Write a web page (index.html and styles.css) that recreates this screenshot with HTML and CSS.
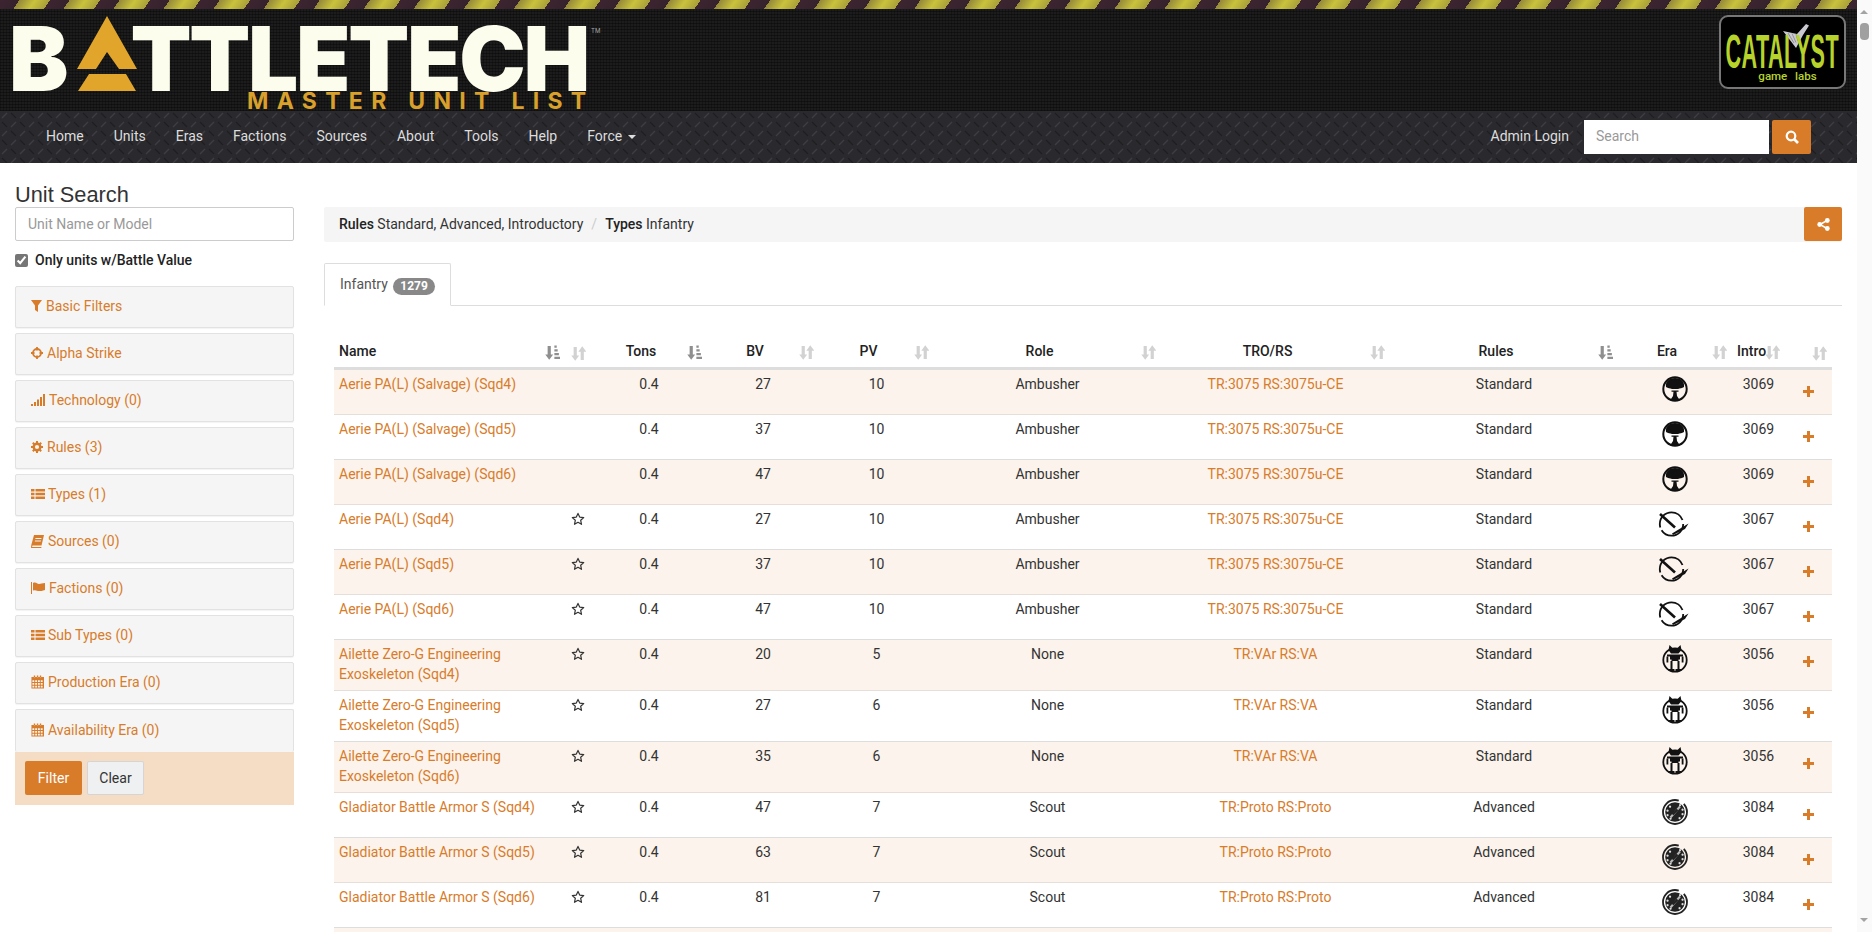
FILE: index.html
```html
<!DOCTYPE html>
<html>
<head>
  <meta charset="utf-8">
  <title>Master Unit List</title>
  <link rel="stylesheet" href="styles.css">
</head>
<body>
<svg class="defs" xmlns="http://www.w3.org/2000/svg">
  <symbol id="era-tree" viewBox="0 0 26 26" overflow="visible">
    <circle cx="13" cy="13" r="11.700" fill="none" stroke="#111" stroke-width="2"/>
    <path d="M4 11C3 5 8 2 13 2s10 3 9 9c-2 1.500-4 1-6 2h-6c-2-1-4-.5-6-2Z" fill="#111"/>
    <path d="M9.500 14.500h7v1.200h-7zM11.500 15.700h3l.5 4.300 3 4.500H8l3-4.500z" fill="#111"/>
  </symbol>
  <symbol id="era-pick" viewBox="0 0 26 26" overflow="visible">
    <circle cx="9.500" cy="13" r="11.700" fill="none" stroke="#111" stroke-width="1.800" stroke-dasharray="30 3 36 4"/>
    <path d="M-2 3L13 16.500" stroke="#111" stroke-width="2.600"/>
    <path d="M10 22.500L26.500 12.500L23 18L11 24Z" fill="#111"/>
  </symbol>
  <symbol id="era-mech" viewBox="0 0 26 26" overflow="visible">
    <circle cx="13" cy="14" r="11.700" fill="none" stroke="#111" stroke-width="1.800"/>
    <path d="M7.500-1l3 3h5l3-3 1 5-3 3.500h-7.500L6.500 4z" fill="#111"/>
    <path d="M5 8.500h16v2H18v3h-1.500v1.500h-7v-1.500H8v-3H5z" fill="#111"/>
    <path d="M4.500 10.500h1.800v6H4.500zM19.700 10.500h1.800v6h-1.800z" fill="#111"/>
    <path d="M8.500 15h2v8h-2zM15.500 15h2v8h-2zM6.500 23h6v2h-6zM13.500 23h6v2h-6z" fill="#111"/>
  </symbol>
  <symbol id="era-disc" viewBox="0 0 26 26" overflow="visible">
    <circle cx="13" cy="13" r="12" fill="none" stroke="#222" stroke-width="1.800" stroke-dasharray="60 6"/>
    <circle cx="13" cy="13" r="9.800" fill="#222"/>
    <path d="M8 6.500a1.100 1.100 0 1 0 .1 0zM5.500 10.500a1.100 1.100 0 1 0 .1 0zM5.500 15a1.100 1.100 0 1 0 .1 0zM8.500 18.500a1.100 1.100 0 1 0 .1 0zM18 5a1.100 1.100 0 1 0 .1 0zM20.500 9.500a1.100 1.100 0 1 0 .1 0zM20.500 14a1.100 1.100 0 1 0 .1 0zM17.500 18a1.100 1.100 0 1 0 .1 0z" fill="#ddd"/>
    <path d="M8.500 18.500L18 7.500" stroke="#bbb" stroke-width="2"/>
    <path d="M10.500 15.500l5-5" stroke="#222" stroke-width="2.400"/>
  </symbol>
  <symbol id="sort-on" viewBox="0 0 16 16">
    <path d="M2.800 1h3.400v9h2.500L4.500 15.800 .3 10h2.500z" fill="currentColor"/>
    <path d="M10 .5h2.500v2.500H10zM10 4.500h3.500V7H10zM10 8.500h4.800V11H10zM10 12.500h6V15h-6z" fill="currentColor"/>
  </symbol>
  <symbol id="sort-off" viewBox="0 0 16 16">
    <path d="M2.800 1h3.400v9h2.500L4.500 15.800 .3 10h2.500zM10.300 15V6H7.800L12 .2 16.200 6h-2.500v9z" fill="currentColor"/>
  </symbol>
  <symbol id="star" viewBox="0 0 14 14">
    <path d="M7 1.400l1.700 3.700 4 .5-3 2.700.8 4L7 10.300l-3.500 2 .8-4-3-2.700 4-.5z" fill="none" stroke="#333" stroke-width="1.200" stroke-linejoin="round"/>
  </symbol>
  <symbol id="plus" viewBox="0 0 11 11">
    <path d="M4 0h3v4h4v3H7v4H4V7H0V4h4z" fill="#d87c2a"/>
  </symbol>
  <symbol id="list" viewBox="0 0 14 12">
    <path d="M0 1h3.500v2.500H0zM0 4.800h3.500v2.500H0zM0 8.600h3.500v2.500H0zM4.500 1H14v2.500H4.500zM4.500 4.800H14v2.500H4.500zM4.500 8.600H14v2.500H4.500z" fill="currentColor"/>
  </symbol>
  <symbol id="calendar" viewBox="0 0 14 14">
    <path d="M3 0h1.500v2H3zM6.300 0h1.500v2H6.300zM9.500 0H11v2H9.500zM.5 1.500H14V14H.5zM1.500 5v2h2V5zm3 0v2h2V5zm3 0v2h2V5zm3 0v2h2V5zM1.500 8v2h2V8zm3 0v2h2V8zm3 0v2h2V8zm3 0v2h2V8zM1.500 11v2h2v-2zm3 0v2h2v-2zm3 0v2h2v-2zm3 0v2h2v-2z" fill="currentColor" fill-rule="evenodd"/>
  </symbol>
</svg>

<div class="page">
  <header class="brand">
    <div class="hazard"></div>
    <div class="brand-row">
      <div class="logo">
        <div class="logo-word">
          <span class="logo-b">B</span>
          <svg class="logo-mark" width="60" height="75" viewBox="0 0 60 75">
            <path d="M30 0L60 53H42L30 36 19 53H0ZM12 58H49L59 75H1Z" fill="#e0a52a"/>
          </svg>
          <span class="logo-rest">TTLETECH</span>
          <span class="logo-tm">TM</span>
        </div>
        <div class="logo-sub">MASTER UNIT LIST</div>
      </div>
      <div class="catalyst">
        <svg class="flask" width="26" height="24" viewBox="0 0 26 24">
          <path d="M0 7L14 10 23 0l3 1.500L20 11 13 24Z" fill="#c9c9d2"/>
          <path d="M5 9l6 10M9 9.500l4 9M13 10l2 7" stroke="#777" stroke-width=".7"/>
        </svg>
        <span class="catalyst-name">CATALYST</span>
        <span class="catalyst-sub">game labs</span>
      </div>
    </div>
  </header>

  <nav class="topnav">
    <a href="#">Home</a>
    <a href="#">Units</a>
    <a href="#">Eras</a>
    <a href="#">Factions</a>
    <a href="#">Sources</a>
    <a href="#">About</a>
    <a href="#">Tools</a>
    <a href="#">Help</a>
    <a href="#">Force <span class="caret"></span></a>
    <a class="admin" href="#">Admin Login</a>
    <input class="nav-search" type="text" placeholder="Search">
    <button class="btn btn-orange nav-btn">
      <svg width="14" height="14" viewBox="0 0 14 14"><circle cx="6" cy="6" r="4.300" fill="none" stroke="#fff" stroke-width="2.200"/><path d="M9 9l4 4" stroke="#fff" stroke-width="2.600"/></svg>
    </button>
  </nav>

  <div class="content">
    <aside class="sidebar">
      <h3>Unit Search</h3>
      <input class="unit-input" type="text" placeholder="Unit Name or Model">
      <label class="only-bv"><input type="checkbox" checked> Only units w/Battle Value</label>

      <a class="panel" href="#"><svg width="11" height="12" viewBox="0 0 11 12"><path d="M0 0h11L7 5.500V12L4 10V5.500z" fill="currentColor"/></svg>Basic Filters</a>
      <a class="panel" href="#"><svg width="12" height="12" viewBox="0 0 12 12"><circle cx="6" cy="6" r="4" fill="none" stroke="currentColor" stroke-width="1.800"/><path d="M6 0v3.500M6 8.500V12M0 6h3.500M8.500 6H12" stroke="currentColor" stroke-width="1.800"/></svg>Alpha Strike</a>
      <a class="panel" href="#"><svg width="14" height="12" viewBox="0 0 14 12"><path d="M0 10h2v2H0zM3 8h2v4H3zM6 5.500h2V12H6zM9 3h2v9H9zM12 0h2v12h-2z" fill="currentColor"/></svg>Technology (0)</a>
      <a class="panel" href="#"><svg width="12" height="12" viewBox="0 0 12 12"><circle cx="6" cy="6" r="3.300" fill="none" stroke="currentColor" stroke-width="2.400"/><path d="M6 0v2.500M6 9.500V12M0 6h2.500M9.500 6H12M1.800 1.800l1.800 1.800M8.400 8.400l1.800 1.800M10.200 1.800L8.400 3.600M3.600 8.400l-1.800 1.800" stroke="currentColor" stroke-width="2"/></svg>Rules (3)</a>
      <a class="panel" href="#"><svg class="wide" width="14" height="12"><use href="#list"/></svg>Types (1)</a>
      <a class="panel" href="#"><svg width="13" height="13" viewBox="0 0 13 13"><path d="M3 0h10l-2.500 10.500H1.500L1 12h9.500l-.3 1H0l.3-3zM4.500 3l-.2 1h6l.2-1zM4 5.500l-.2 1h6l.2-1z" fill="currentColor" fill-rule="evenodd"/></svg>Sources (0)</a>
      <a class="panel" href="#"><svg width="14" height="12" viewBox="0 0 14 12"><path d="M0 0h1v12H0zM2 1c3-1.500 4 1 6 1 2 0 3-1 6-1v7c-3 1-4 1-6 1-2 0-3-1.500-6-.5z" fill="currentColor"/></svg>Factions (0)</a>
      <a class="panel" href="#"><svg class="wide" width="14" height="12"><use href="#list"/></svg>Sub Types (0)</a>
      <a class="panel" href="#"><svg width="13" height="14"><use href="#calendar"/></svg>Production Era (0)</a>
      <a class="panel panel-last" href="#"><svg width="13" height="14"><use href="#calendar"/></svg>Availability Era (0)</a>
      <div class="filter-bar">
        <button class="btn btn-orange">Filter</button>
        <button class="btn btn-plain">Clear</button>
      </div>
    </aside>

    <main class="results">
      <div class="crumbs">
        <span><b>Rules</b> Standard, Advanced, Introductory</span>
        <span class="crumb-sep">/</span>
        <span><b>Types</b> Infantry</span>
        <button class="btn btn-orange share-btn">
          <svg width="13" height="13" viewBox="0 0 13 13"><path d="M10 2.500L3 6.500l7 4" fill="none" stroke="#fff" stroke-width="1.500"/><circle cx="10.300" cy="2.500" r="2.400" fill="#fff"/><circle cx="2.700" cy="6.500" r="2.400" fill="#fff"/><circle cx="10.300" cy="10.500" r="2.400" fill="#fff"/></svg>
        </button>
      </div>

      <div class="tabs">
        <div class="tab">Infantry <span class="badge">1279</span></div>
      </div>

      <table class="units">
        <colgroup>
          <col class="c-name"><col class="c-star"><col class="c-tons"><col class="c-bv"><col class="c-pv"><col class="c-role"><col class="c-tro"><col class="c-rules"><col class="c-era"><col class="c-intro"><col class="c-add">
        </colgroup>
        <thead>
          <tr>
            <th class="left"><div><span>Name</span><svg class="on"><use href="#sort-on"/></svg></div></th>
            <th><div><span></span><svg><use href="#sort-off"/></svg></div></th>
            <th><div><span>Tons</span><svg class="on"><use href="#sort-on"/></svg></div></th>
            <th><div><span>BV</span><svg><use href="#sort-off"/></svg></div></th>
            <th><div><span>PV</span><svg><use href="#sort-off"/></svg></div></th>
            <th><div><span>Role</span><svg><use href="#sort-off"/></svg></div></th>
            <th><div><span>TRO/RS</span><svg><use href="#sort-off"/></svg></div></th>
            <th><div><span>Rules</span><svg class="on"><use href="#sort-on"/></svg></div></th>
            <th><div><span>Era</span><svg><use href="#sort-off"/></svg></div></th>
            <th><div><span>Intro</span><svg><use href="#sort-off"/></svg></div></th>
            <th><div><span></span><svg><use href="#sort-off"/></svg></div></th>
          </tr>
        </thead>
        <tbody>
          <tr class="odd"><td class="left"><a href="#">Aerie PA(L) (Salvage) (Sqd4)</a></td><td></td><td>0.4</td><td>27</td><td>10</td><td>Ambusher</td><td><a href="#">TR:3075 RS:3075u-CE</a></td><td>Standard</td><td><svg class="era"><use href="#era-tree"/></svg></td><td>3069</td><td><svg class="add"><use href="#plus"/></svg></td></tr>
          <tr><td class="left"><a href="#">Aerie PA(L) (Salvage) (Sqd5)</a></td><td></td><td>0.4</td><td>37</td><td>10</td><td>Ambusher</td><td><a href="#">TR:3075 RS:3075u-CE</a></td><td>Standard</td><td><svg class="era"><use href="#era-tree"/></svg></td><td>3069</td><td><svg class="add"><use href="#plus"/></svg></td></tr>
          <tr class="odd"><td class="left"><a href="#">Aerie PA(L) (Salvage) (Sqd6)</a></td><td></td><td>0.4</td><td>47</td><td>10</td><td>Ambusher</td><td><a href="#">TR:3075 RS:3075u-CE</a></td><td>Standard</td><td><svg class="era"><use href="#era-tree"/></svg></td><td>3069</td><td><svg class="add"><use href="#plus"/></svg></td></tr>
          <tr><td class="left"><a href="#">Aerie PA(L) (Sqd4)</a></td><td><svg class="fav"><use href="#star"/></svg></td><td>0.4</td><td>27</td><td>10</td><td>Ambusher</td><td><a href="#">TR:3075 RS:3075u-CE</a></td><td>Standard</td><td><svg class="era"><use href="#era-pick"/></svg></td><td>3067</td><td><svg class="add"><use href="#plus"/></svg></td></tr>
          <tr class="odd"><td class="left"><a href="#">Aerie PA(L) (Sqd5)</a></td><td><svg class="fav"><use href="#star"/></svg></td><td>0.4</td><td>37</td><td>10</td><td>Ambusher</td><td><a href="#">TR:3075 RS:3075u-CE</a></td><td>Standard</td><td><svg class="era"><use href="#era-pick"/></svg></td><td>3067</td><td><svg class="add"><use href="#plus"/></svg></td></tr>
          <tr><td class="left"><a href="#">Aerie PA(L) (Sqd6)</a></td><td><svg class="fav"><use href="#star"/></svg></td><td>0.4</td><td>47</td><td>10</td><td>Ambusher</td><td><a href="#">TR:3075 RS:3075u-CE</a></td><td>Standard</td><td><svg class="era"><use href="#era-pick"/></svg></td><td>3067</td><td><svg class="add"><use href="#plus"/></svg></td></tr>
          <tr class="odd"><td class="left"><a href="#">Ailette Zero-G Engineering Exoskeleton (Sqd4)</a></td><td><svg class="fav"><use href="#star"/></svg></td><td>0.4</td><td>20</td><td>5</td><td>None</td><td><a href="#">TR:VAr RS:VA</a></td><td>Standard</td><td><svg class="era"><use href="#era-mech"/></svg></td><td>3056</td><td><svg class="add"><use href="#plus"/></svg></td></tr>
          <tr><td class="left"><a href="#">Ailette Zero-G Engineering Exoskeleton (Sqd5)</a></td><td><svg class="fav"><use href="#star"/></svg></td><td>0.4</td><td>27</td><td>6</td><td>None</td><td><a href="#">TR:VAr RS:VA</a></td><td>Standard</td><td><svg class="era"><use href="#era-mech"/></svg></td><td>3056</td><td><svg class="add"><use href="#plus"/></svg></td></tr>
          <tr class="odd"><td class="left"><a href="#">Ailette Zero-G Engineering Exoskeleton (Sqd6)</a></td><td><svg class="fav"><use href="#star"/></svg></td><td>0.4</td><td>35</td><td>6</td><td>None</td><td><a href="#">TR:VAr RS:VA</a></td><td>Standard</td><td><svg class="era"><use href="#era-mech"/></svg></td><td>3056</td><td><svg class="add"><use href="#plus"/></svg></td></tr>
          <tr><td class="left"><a href="#">Gladiator Battle Armor S (Sqd4)</a></td><td><svg class="fav"><use href="#star"/></svg></td><td>0.4</td><td>47</td><td>7</td><td>Scout</td><td><a href="#">TR:Proto RS:Proto</a></td><td>Advanced</td><td><svg class="era"><use href="#era-disc"/></svg></td><td>3084</td><td><svg class="add"><use href="#plus"/></svg></td></tr>
          <tr class="odd"><td class="left"><a href="#">Gladiator Battle Armor S (Sqd5)</a></td><td><svg class="fav"><use href="#star"/></svg></td><td>0.4</td><td>63</td><td>7</td><td>Scout</td><td><a href="#">TR:Proto RS:Proto</a></td><td>Advanced</td><td><svg class="era"><use href="#era-disc"/></svg></td><td>3084</td><td><svg class="add"><use href="#plus"/></svg></td></tr>
          <tr><td class="left"><a href="#">Gladiator Battle Armor S (Sqd6)</a></td><td><svg class="fav"><use href="#star"/></svg></td><td>0.4</td><td>81</td><td>7</td><td>Scout</td><td><a href="#">TR:Proto RS:Proto</a></td><td>Advanced</td><td><svg class="era"><use href="#era-disc"/></svg></td><td>3084</td><td><svg class="add"><use href="#plus"/></svg></td></tr>
          <tr class="odd"><td colspan="11">&nbsp;</td></tr>
        </tbody>
      </table>
    </main>
  </div>
</div>

<div class="scrollbar">
  <span class="arrow-up"></span>
  <span class="thumb"></span>
  <span class="arrow-down"></span>
</div>
</body>
</html>
```

FILE: styles.css
```css
html, body {
  margin: 0;
  padding: 0;
  height: 932px;
  overflow: hidden;
}

body {
  display: flex;
  font-family: Roboto, "Liberation Sans", sans-serif;
  font-size: 14px;
  line-height: 20px;
  color: #333;
  background: #fff;
}

a {
  color: #d87c2a;
  text-decoration: none;
}

.defs {
  display: none;
}

.page {
  width: 1857px;
  flex: none;
  overflow: hidden;
}

/* header */
.brand {
  height: 111px;
  background-color: #1b1c1b;
  background-image:
    repeating-linear-gradient(0deg, rgba(0, 0, 0, .35) 0 1px, transparent 1px 3px),
    repeating-linear-gradient(90deg, rgba(0, 0, 0, .25) 0 1px, transparent 1px 3px);
}

.hazard {
  height: 9px;
  background: repeating-linear-gradient(125deg,
    #3d2530 0, #35222c 16px,
    #94883a 16px, #c9c23c 29px, #a89f3a 41px);
}

.brand-row {
  display: flex;
  justify-content: space-between;
  padding: 6px 11px 0 13px;
}

.logo {
  width: 600px;
}

.logo-word {
  display: flex;
  align-items: flex-end;
  height: 76px;
  font-family: Inter, "Liberation Sans", sans-serif;
  font-weight: 900;
  font-size: 89px;
  line-height: 65px;
  color: #fdfdee;
}

.logo-word span {
  display: block;
  height: 65px;
}

.logo-word .logo-b {
  margin-left: -4px;
}

.logo-mark {
  flex: none;
  margin: 0 -7px 0 9px;
  position: relative;
  z-index: 1;
}

.logo-rest {
  letter-spacing: -2.300px;
}

.logo-word .logo-tm {
  font-size: 6px;
  font-weight: 400;
  line-height: 10px;
  color: #aaa;
  margin-left: 3px;
}

.logo-sub {
  margin: 1px 0 0 234px;
  font-family: Inter, "Liberation Sans", sans-serif;
  font-weight: 700;
  font-size: 23px;
  line-height: 18px;
  letter-spacing: 8.300px;
  white-space: nowrap;
  color: #d9a02c;
}

.catalyst {
  width: 123px;
  height: 70px;
  margin-top: 0;
  border: 2px solid #777;
  border-radius: 9px;
  background: #000;
  display: flex;
  flex-direction: column;
  align-items: center;
  overflow: hidden;
  position: relative;
}

.flask {
  position: absolute;
  top: 7px;
  left: 62px;
}

.catalyst-name {
  margin-top: 17px;
  font-family: "Liberation Sans", sans-serif;
  font-weight: 700;
  font-size: 48px;
  line-height: 36px;
  letter-spacing: 1px;
  color: #b7d32b;
  transform: scaleX(.45);
  white-space: nowrap;
}

.catalyst-sub {
  margin-top: 1px;
  font-size: 11.500px;
  font-weight: 500;
  line-height: 10px;
  color: #b7d32b;
  padding-left: 10px;
  word-spacing: 5px;
}

/* nav */
.topnav {
  display: flex;
  align-items: center;
  height: 52px;
  padding: 0 46px 0 31px;
  background-color: #2a2a2e;
  background-image: url("data:image/svg+xml,%3Csvg xmlns='http://www.w3.org/2000/svg' width='18' height='18'%3E%3Cpath d='M2 7l5-5M11 16l5-5' stroke='%233d3d43' stroke-width='1.300'/%3E%3Cpath d='M11 2l5 5M2 11l5 5' stroke='%231e1e21' stroke-width='1.300'/%3E%3C/svg%3E");
}

.topnav a {
  padding: 0 15px;
  line-height: 48px;
  height: 50px;
  color: #ddd;
}

.caret {
  display: inline-block;
  margin-left: 2px;
  vertical-align: middle;
  border-top: 4px solid #ddd;
  border-left: 4px solid transparent;
  border-right: 4px solid transparent;
}

.topnav .admin {
  margin-left: auto;
}

.nav-search {
  width: 185px;
  height: 34px;
  box-sizing: border-box;
  padding: 0 12px 2px;
  border: 0;
  font: inherit;
  background: #fff;
}

.nav-search::placeholder,
.unit-input::placeholder {
  color: #999;
}

.btn {
  height: 34px;
  border: 1px solid transparent;
  border-radius: 2px;
  font: inherit;
  padding: 0;
}

.btn-orange {
  background: #d87c2a;
  color: #fff;
}

.btn-plain {
  background: #eff0f2;
  border-color: #d5d5d5;
  color: #333;
}

.nav-btn {
  width: 39px;
  margin-left: 3px;
  flex: none;
}

.btn svg {
  display: block;
  margin: 0 auto;
}

/* page body */
.content {
  display: flex;
  gap: 30px;
  padding: 20px 15px 0;
}

.sidebar {
  width: 279px;
  flex: none;
}

.sidebar h3 {
  margin: 0;
  height: 24px;
  font-family: "Liberation Sans", sans-serif;
  font-size: 21.800px;
  font-weight: 400;
  line-height: 24px;
  color: #333;
}

.unit-input {
  display: block;
  width: 100%;
  height: 34px;
  box-sizing: border-box;
  padding: 0 12px;
  border: 1px solid #ccc;
  border-radius: 2px;
  font: inherit;
}

.only-bv {
  display: flex;
  align-items: center;
  gap: 7px;
  height: 20px;
  margin: 9px 0 16px;
  font-weight: 500;
  color: #222;
}

.only-bv input {
  width: 13px;
  height: 13px;
  margin: 1px 0 0;
  accent-color: #767676;
}

.panel {
  display: flex;
  align-items: center;
  box-sizing: border-box;
  height: 42px;
  margin-bottom: 5px;
  padding: 0 15px 2px;
  background: #f5f5f5;
  border: 1px solid #e2e2e2;
  border-radius: 2px;
  box-shadow: 0 1px 1px rgba(0, 0, 0, .05);
}

.panel svg {
  flex: none;
  margin-right: 4px;
}

.panel svg.wide {
  margin-right: 3px;
}

.panel-last {
  height: 43px;
  margin-bottom: 0;
  padding-bottom: 3px;
  border-bottom: 0;
  box-shadow: none;
}

.filter-bar {
  display: flex;
  gap: 5px;
  height: 34px;
  padding: 9px 10px 10px;
  background: #f5dcc4;
}

.filter-bar .btn {
  width: 57px;
}

/* results */
.results {
  width: 1518px;
  flex: none;
  padding-top: 24px;
}

.crumbs {
  display: flex;
  align-items: center;
  height: 35px;
  padding-left: 15px;
  background: #f5f5f5;
  border-radius: 2px;
}

.crumbs > span {
  margin-bottom: 2px;
}

.crumbs b {
  font-weight: 500;
  color: #222;
}

.crumb-sep {
  padding: 0 8px;
  color: #ccc;
}

.share-btn {
  width: 38px;
  margin-left: auto;
  align-self: flex-start;
}

.tabs {
  margin-top: 21px;
  border-bottom: 1px solid #ddd;
  height: 42px;
}

.tab {
  display: inline-block;
  box-sizing: border-box;
  height: 43px;
  padding: 10px 15px;
  border: 1px solid #ddd;
  border-bottom-color: #fff;
  border-radius: 2px 2px 0 0;
  background: #fff;
  color: #555;
}

.badge {
  display: inline-block;
  margin-left: 2px;
  padding: 0 7px;
  border-radius: 9px;
  background: #888;
  color: #fff;
  font-size: 12px;
  font-weight: 700;
  line-height: 17px;
  vertical-align: -1px;
}

.units {
  width: 1498px;
  margin: 28px 0 0 10px;
  table-layout: fixed;
  border-collapse: separate;
  border-spacing: 0;
}

.c-name { width: 231px; }
.c-star { width: 26px; }
.c-tons { width: 116px; }
.c-bv { width: 112px; }
.c-pv { width: 115px; }
.c-role { width: 227px; }
.c-tro { width: 229px; }
.c-rules { width: 228px; }
.c-era { width: 114px; }
.c-intro { width: 53px; }
.c-add { width: 47px; }

.units th {
  padding: 7px 5px 6px;
  border-bottom: 3px solid #ddd;
  font-weight: 500;
  color: #222;
}

.units th div {
  display: flex;
}

.units th span {
  flex: 1;
  min-width: 0;
  white-space: nowrap;
}

.units th svg {
  flex: none;
  width: 15px;
  height: 15px;
  margin: 4px 0 0 1px;
  color: #d2d2d2;
}

.units th svg.on {
  color: #8f8f8f;
}

.units td {
  padding: 4px 5px 6px;
  border-bottom: 1px solid #ddd;
  vertical-align: top;
  text-align: center;
}

.units .left {
  text-align: left;
}

.units .odd td {
  background: #fbf3ec;
  border-bottom-color: #e6dfd9;
}

.era {
  display: block;
  width: 26px;
  height: 26px;
  margin: 2px auto 6px;
  overflow: visible;
}

.add {
  display: block;
  width: 11px;
  height: 11px;
  margin: 12px auto 0;
}

.fav {
  display: block;
  width: 14px;
  height: 14px;
  margin: 3px auto 0;
}

/* fake browser scrollbar, the page is taller than the window */
.scrollbar {
  width: 15px;
  flex: none;
  position: relative;
  background: #fafafa;
}

.arrow-up,
.arrow-down {
  position: absolute;
  left: 3px;
  border-left: 4px solid transparent;
  border-right: 4px solid transparent;
}

.arrow-up {
  top: 10px;
  border-bottom: 4px solid #a3a3a3;
}

.arrow-down {
  bottom: 10px;
  border-top: 4px solid #a3a3a3;
}

.thumb {
  position: absolute;
  top: 23px;
  left: 3px;
  width: 9px;
  height: 17px;
  border-radius: 4px;
  background: #a0a0a0;
}
```
